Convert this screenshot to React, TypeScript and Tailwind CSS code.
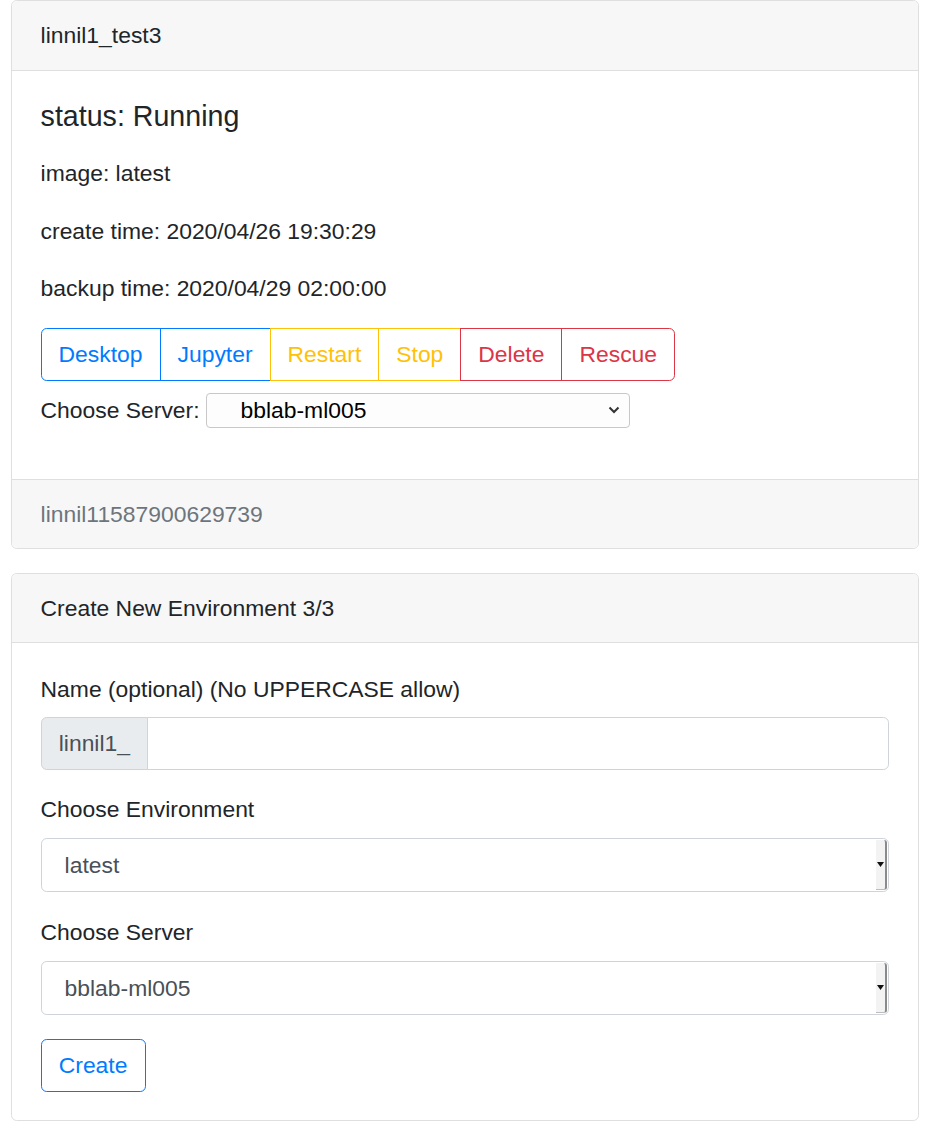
import React from "react";

function NativeSelect({ value }: { value: string }) {
  return (
    <div className="flex h-[54px] w-full rounded-[5.7px] border border-[#ced4da] bg-white">
      <div className="flex flex-1 items-center pl-[23px] text-[#495057]">{value}</div>
      <div className="my-[1px] mr-[1px] flex w-[11px] items-center justify-center rounded-r-[3px] border-r-2 border-b border-r-[#8a8a8a] border-b-[#bdbdbd] bg-[#f3f3f3]">
        <svg width="7" height="5" viewBox="0 0 7 5">
          <polygon points="0,0 7,0 3.5,5" fill="#111" />
        </svg>
      </div>
    </div>
  );
}

export default function App() {
  const font = { fontFamily: '"Liberation Sans", Arial, sans-serif' };
  return (
    <div
      className="min-h-[1137px] bg-white pl-[11px] pr-[9px] text-[22.88px] leading-[1.5] text-[#212529]"
      style={font}
    >
      {/* Card 1 */}
      <div className="flex flex-col rounded-[5.7px] border border-[#dfdfdf]">
        <div className="rounded-t-[5px] border-b border-[#dfdfdf] bg-[#f7f7f7] px-[28.6px] py-[17.16px]">
          linnil1_test3
        </div>
        <div className="px-[28.6px] pb-[28.6px] pt-[28.6px]">
          <div className="mb-[22.88px] text-[28.6px] leading-[1.2]">status: Running</div>
          <p className="mb-[22.88px]">image: latest</p>
          <p className="mb-[22.88px]">create time: 2020/04/26 19:30:29</p>
          <p className="mb-[22.88px]">backup time: 2020/04/29 02:00:00</p>
          <div className="flex">
            <button className="h-[53px] rounded-l-[5.7px] border border-[#007bff] px-[17px] text-[#007bff]">
              Desktop
            </button>
            <button className="-ml-px h-[53px] border border-[#007bff] px-[17px] text-[#007bff]">
              Jupyter
            </button>
            <button className="-ml-px h-[53px] border border-[#ffc107] px-[17px] text-[#ffc107]">
              Restart
            </button>
            <button className="-ml-px h-[53px] border border-[#ffc107] px-[17px] text-[#ffc107]">
              Stop
            </button>
            <button className="-ml-px h-[53px] border border-[#dc3545] px-[17px] text-[#dc3545]">
              Delete
            </button>
            <button className="-ml-px h-[53px] rounded-r-[5.7px] border border-[#dc3545] px-[17px] text-[#dc3545]">
              Rescue
            </button>
          </div>
          <div className="mt-[12px] flex items-center">
            <span>Choose Server:</span>
            <div className="ml-[6px] flex h-[35px] w-[424px] items-center rounded-[4px] border border-[#c8c8c8] bg-[#fdfdfd] pl-[34px] pr-[9px] text-black">
              <span className="flex-1 leading-none">bblab-ml005</span>
              <svg width="12" height="8" viewBox="0 0 12 8">
                <path d="M1.5 1.5 L6 6 L10.5 1.5" stroke="#333" strokeWidth="2" fill="none" />
              </svg>
            </div>
          </div>
          <div className="h-[22px]" />
        </div>
        <div className="rounded-b-[5px] border-t border-[#dfdfdf] bg-[#f7f7f7] px-[28.6px] py-[17.16px] text-[#6c757d]">
          linnil11587900629739
        </div>
      </div>

      {/* Card 2 */}
      <div className="mt-[24px] flex flex-col rounded-[5.7px] border border-[#dfdfdf]">
        <div className="rounded-t-[5px] border-b border-[#dfdfdf] bg-[#f7f7f7] px-[28.6px] pb-[17.16px] pt-[16.5px]">
          Create New Environment 3/3
        </div>
        <div className="px-[28.6px] py-[28.6px]">
          <div className="mb-[10.44px]">Name (optional) (No UPPERCASE allow)</div>
          <div className="mb-[22.88px] flex h-[53px]">
            <div className="flex items-center rounded-l-[5.7px] border border-[#ced4da] bg-[#e9ecef] px-[17.16px] text-[#495057]">
              linnil1_
            </div>
            <div className="-ml-px flex-1 rounded-r-[5.7px] border border-[#ced4da] bg-white" />
          </div>
          <div className="mb-[11.44px]">Choose Environment</div>
          <div className="mb-[22.88px]">
            <NativeSelect value="latest" />
          </div>
          <div className="mb-[11.44px]">Choose Server</div>
          <div className="mb-[23.88px]">
            <NativeSelect value="bblab-ml005" />
          </div>
          <button className="h-[53px] rounded-[5.7px] border border-[#007bff] px-[17.16px] text-[#007bff]">
            Create
          </button>
        </div>
      </div>
    </div>
  );
}
